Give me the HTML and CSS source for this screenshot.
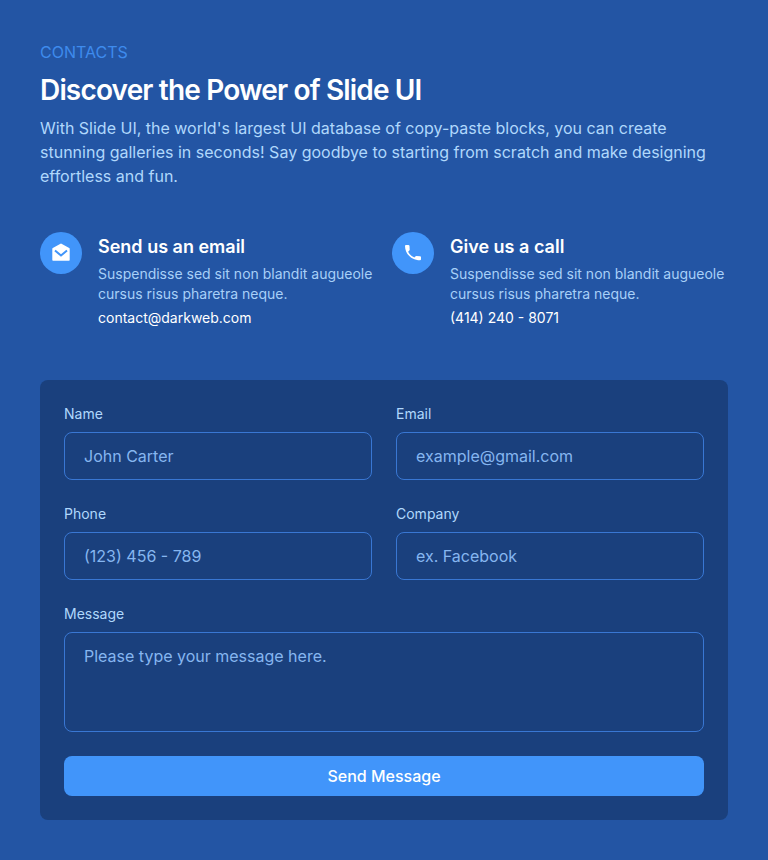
FILE: index.html
```html
<!DOCTYPE html>
<html lang="en">
<head>
<meta charset="utf-8">
<meta name="viewport" content="width=device-width, initial-scale=1">
<title>Contacts</title>
<link rel="stylesheet" href="styles.css">
</head>
<body>
<main class="contacts">
  <header class="intro">
    <p class="eyebrow">CONTACTS</p>
    <h1 class="title">Discover the Power of Slide UI</h1>
    <p class="lead">With Slide UI, the world's largest UI database of copy-paste blocks, you can create stunning galleries in seconds! Say goodbye to starting from scratch and make designing effortless and fun.</p>
  </header>
  <section class="channels">
    <article class="channel">
      <span class="badge">
        <svg width="20" height="20" viewBox="0 0 20 20" aria-hidden="true"><path fill="#fff" d="M10 .6 18.200 5q.5.3.5.900v11.100q0 .7-.7.7H2q-.7 0-.7-.7V5.900q0-.6.5-.9z"/><path fill="none" stroke="#4195fa" stroke-width="2" d="m4 7.500 6 5 6-5"/></svg>
      </span>
      <div class="details">
        <h2 class="subtitle">Send us an email</h2>
        <p class="note">Suspendisse sed sit non blandit augueole cursus risus pharetra neque.</p>
        <a class="link" href="mailto:contact@darkweb.com">contact@darkweb.com</a>
      </div>
    </article>
    <article class="channel">
      <span class="badge">
        <svg width="20" height="20" viewBox="0 0 20 20" aria-hidden="true"><path fill="#fff" d="M3 2h2.300q1.100 0 1.200 1l.2 3.700q0 .7-.6 1.100L5.100 8.700q1.900 4 6.300 5.700l.9-1q.5-.6 1.200-.5l3.500.3q1 .1 1 1.100v2q0 1-1 1C8.600 17.300 2 11 2 3q0-1 1-1z"/></svg>
      </span>
      <div class="details">
        <h2 class="subtitle">Give us a call</h2>
        <p class="note">Suspendisse sed sit non blandit augueole cursus risus pharetra neque.</p>
        <a class="link" href="tel:+14142408071">(414) 240 - 8071</a>
      </div>
    </article>
  </section>
  <form class="form">
    <div class="field">
      <label class="label" for="name">Name</label>
      <input class="control" id="name" type="text" placeholder="John Carter">
    </div>
    <div class="field">
      <label class="label" for="email">Email</label>
      <input class="control" id="email" type="email" placeholder="example@gmail.com">
    </div>
    <div class="field">
      <label class="label" for="phone">Phone</label>
      <input class="control" id="phone" type="tel" placeholder="(123) 456 - 789">
    </div>
    <div class="field">
      <label class="label" for="company">Company</label>
      <input class="control" id="company" type="text" placeholder="ex. Facebook">
    </div>
    <div class="field wide">
      <label class="label" for="message">Message</label>
      <textarea class="control message" id="message" placeholder="Please type your message here."></textarea>
    </div>
    <button class="submit wide" type="submit">Send Message</button>
  </form>
</main>
</body>
</html>
```
FILE: styles.css
```css
* {
  box-sizing: border-box;
}

body {
  margin: 0;
  min-height: 100vh;
  background: #2355a4;
  color: #fff;
  font: 16px/24px Inter, sans-serif;
}

h1, h2, p {
  margin: 0;
}

.contacts {
  max-width: 1280px;
  margin: 0 auto;
  padding: 40px;
}

.eyebrow {
  color: #3e8bed;
}

.title {
  margin: 8px 0;
  font-size: 28px;
  line-height: 36px;
  font-weight: 600;
  letter-spacing: -0.03em;
}

.lead {
  color: #b0d8fc;
}

.channels {
  display: grid;
  grid-template-columns: 1fr 1fr;
  gap: 16px;
  margin: 44px 0 52px;
}

.channel {
  display: flex;
  align-items: flex-start;
  gap: 16px;
}

.badge {
  display: flex;
  flex: none;
  align-items: center;
  justify-content: center;
  width: 42px;
  height: 42px;
  border-radius: 50%;
  background: #4195fa;
}

.subtitle {
  margin: 0 0 2px;
  font-size: 18px;
  line-height: 30px;
  font-weight: 600;
}

.note {
  margin-bottom: 4px;
  color: #a8d0f8;
  font-size: 14px;
  line-height: 20px;
}

.link {
  display: block;
  color: #fff;
  font-size: 14px;
  line-height: 20px;
  text-decoration: none;
}

.form {
  display: grid;
  grid-template-columns: 1fr 1fr;
  gap: 24px;
  padding: 24px;
  border-radius: 8px;
  background: #1a407d;
}

.field {
  display: flex;
  flex-direction: column;
  gap: 8px;
}

.wide {
  grid-column: 1 / -1;
}

.label {
  color: #b0d8fc;
  font-size: 14px;
  line-height: 20px;
}

.control {
  width: 100%;
  height: 48px;
  padding: 11px 19px;
  border: 1px solid #3977d3;
  border-radius: 8px;
  background: transparent;
  color: #fff;
  font: inherit;
}

.control::placeholder {
  color: #86b6f0;
  opacity: 1;
}

.message {
  height: 100px;
  resize: none;
}

.submit {
  height: 40px;
  border: 0;
  border-radius: 8px;
  background: #4195fa;
  color: #fff;
  font: inherit;
  font-weight: 500;
  cursor: pointer;
}
```
